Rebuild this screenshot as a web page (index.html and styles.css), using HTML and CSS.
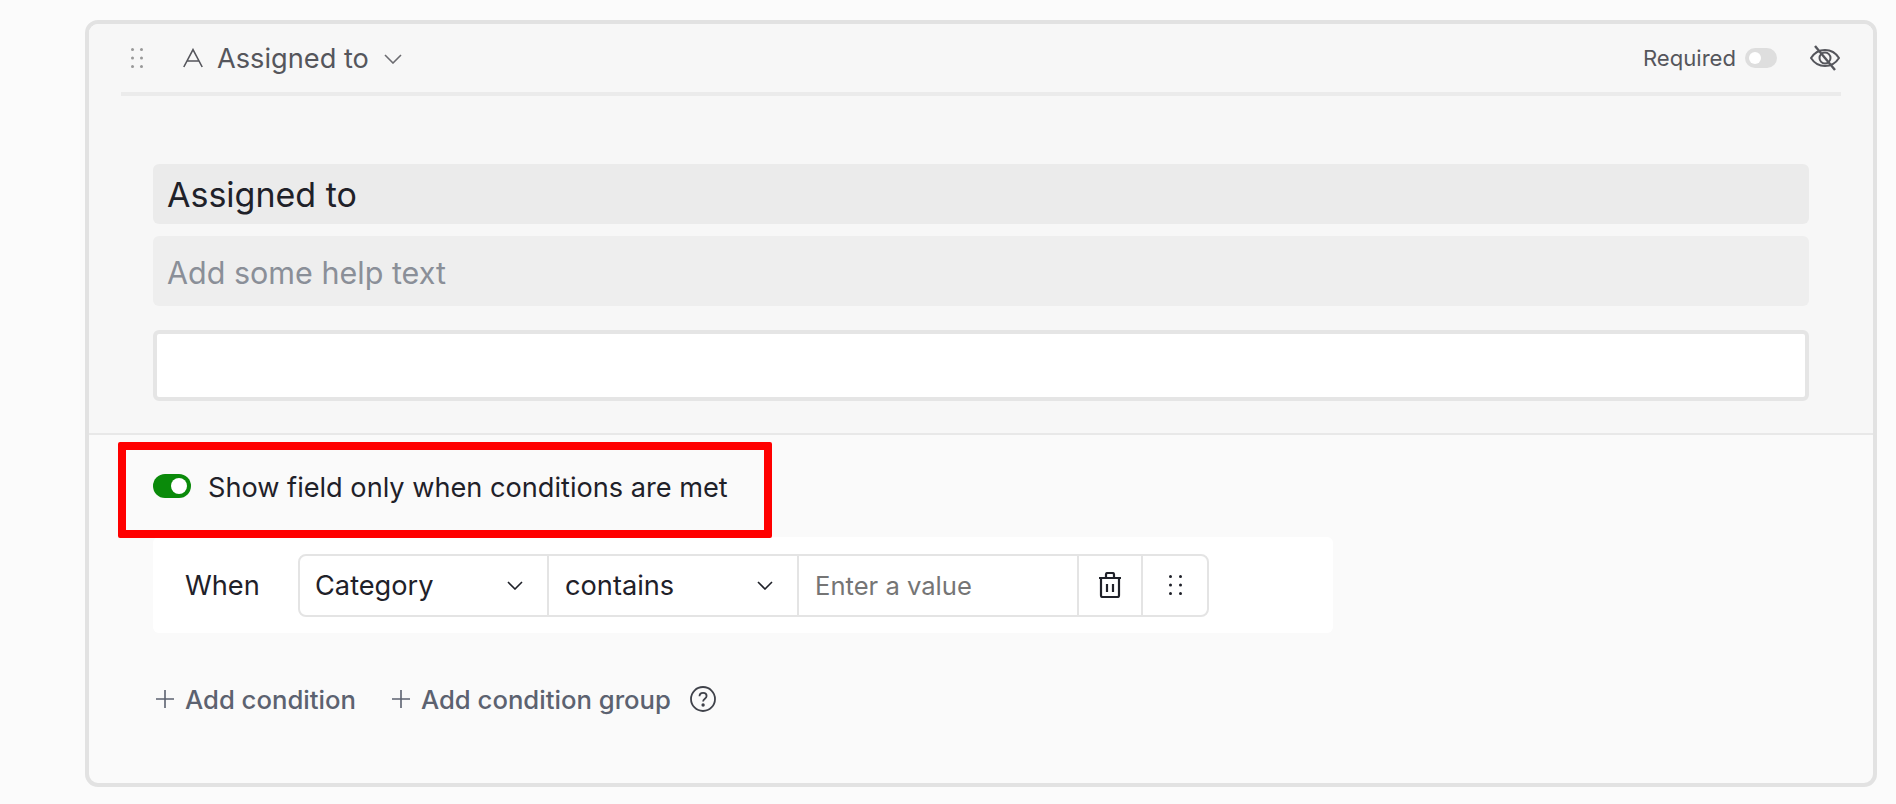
FILE: index.html
```html
<!DOCTYPE html>
<html lang="en">
<head>
<meta charset="utf-8">
<title>Assigned to</title>
<link rel="stylesheet" href="styles.css">
</head>
<body>
<section class="card">
  <div class="top">
    <header class="head">
      <svg class="drag" width="12" height="20" viewBox="0 0 12 20"><g fill="#999"><circle cx="1.5" cy="1.5" r="1.5"/><circle cx="10.5" cy="1.5" r="1.5"/><circle cx="1.5" cy="10" r="1.5"/><circle cx="10.5" cy="10" r="1.5"/><circle cx="1.5" cy="18.5" r="1.5"/><circle cx="10.5" cy="18.5" r="1.5"/></g></svg>
      <svg class="type" width="20" height="20" viewBox="0 0 20 20" fill="none" stroke="#55565c" stroke-width="1.6"><path d="M.8 19 10 1.6 19.2 19M4.2 13h11.6"/></svg>
      <span class="title">Assigned to</span>
      <svg class="caret" width="18" height="10" viewBox="0 0 18 10" fill="none" stroke="#6b6b70" stroke-width="1.6"><path d="M1 1l8 8 8-8"/></svg>
      <span class="req">Required</span>
      <span class="switch-off"><span class="knob-off"></span></span>
      <svg class="eye" width="32" height="26" viewBox="0 0 32 26" fill="none" stroke="#55565c" stroke-width="2"><path d="M2 13c3.500-5.500 8-8 14-8s10.500 2.500 14 8c-3.500 5.500-8 8-14 8S5.500 18.500 2 13z"/><circle cx="16" cy="13" r="5.500"/><path d="M6 1l20 24" stroke-width="2.400"/></svg>
    </header>
    <div class="fields">
      <div class="label-box">Assigned to</div>
      <div class="help-box">Add some help text</div>
      <div class="preview-box"></div>
    </div>
  </div>
  <div class="bottom">
    <div class="highlight"></div>
    <div class="show-row">
      <span class="switch-on"><span class="knob-on"></span></span>
      <span class="show-text">Show field only when conditions are met</span>
    </div>
    <div class="panel">
      <span class="when">When</span>
      <div class="group">
        <div class="cell cell-select"><span>Category</span><svg width="16" height="9" viewBox="0 0 16 9" fill="none" stroke="#1f2129" stroke-width="1.600"><path d="M1 1l7 7 7-7"/></svg></div>
        <div class="cell cell-select"><span>contains</span><svg width="16" height="9" viewBox="0 0 16 9" fill="none" stroke="#1f2129" stroke-width="1.600"><path d="M1 1l7 7 7-7"/></svg></div>
        <div class="cell cell-value">Enter a value</div>
        <div class="cell cell-icon cell-trash">
          <svg width="24" height="26" viewBox="0 0 24 26" fill="none" stroke="#1f2129" stroke-width="2.200"><path d="M1 6h22M8 6V2.500C8 1.700 8.700 1 9.500 1h5c.8 0 1.500.7 1.500 1.500V6M3 6v17.500c0 .8.700 1.500 1.500 1.500h15c.8 0 1.500-.7 1.500-1.500V6M9 12v8M15 12v8"/></svg>
        </div>
        <div class="cell cell-icon cell-dots">
          <svg width="13" height="20" viewBox="0 0 13 20"><g fill="#1f2129"><circle cx="1.500" cy="1.500" r="1.500"/><circle cx="11.500" cy="1.500" r="1.500"/><circle cx="1.500" cy="10" r="1.500"/><circle cx="11.500" cy="10" r="1.500"/><circle cx="1.500" cy="18.500" r="1.500"/><circle cx="11.500" cy="18.500" r="1.500"/></g></svg>
        </div>
      </div>
    </div>
    <div class="adds">
      <span class="add"><svg width="18" height="18" viewBox="0 0 18 18" fill="none" stroke="#5c6270" stroke-width="1.600"><path d="M9 0v18M0 9h18"/></svg>Add condition</span>
      <span class="add add-group"><svg width="18" height="18" viewBox="0 0 18 18" fill="none" stroke="#5c6270" stroke-width="1.600"><path d="M9 0v18M0 9h18"/></svg>Add condition group</span>
      <svg class="help" width="26" height="26" viewBox="0 0 26 26" fill="none" stroke="#3f424a" stroke-width="1.800"><circle cx="13" cy="13" r="12"/><path d="M9.500 10.200c0-2 1.600-3.400 3.600-3.400s3.500 1.300 3.500 3.100c0 2.800-3.500 2.800-3.500 5.600"/><circle cx="13.100" cy="19" r=".8" fill="#3f424a"/></svg>
    </div>
  </div>
</section>
</body>
</html>
```
FILE: styles.css
```css
* { box-sizing: border-box; }
html, body { margin: 0; padding: 0; }
body {
  height: 804px;
  overflow: hidden;
  background: #fbfbfb;
  font-family: Inter, "Liberation Sans", sans-serif;
  color: #1f2129;
}
.card {
  width: 1792px;
  height: 767px;
  margin: 20px 0 0 85px;
  border: 4px solid #e2e2e2;
  border-radius: 13px;
  background: #fafafa;
  overflow: hidden;
}
.top {
  height: 411px;
  background: #f7f7f7;
  border-bottom: 2px solid #e8e8e8;
}
.head {
  height: 72px;
  margin: 0 32px;
  border-bottom: 4px solid #ebebeb;
  display: flex;
  align-items: center;
}
.drag { margin-left: 10px; }
.type { margin-left: 40px; }
.title { margin-left: 14px; font-size: 27.2px; color: #55565c; }
.caret { margin-left: 15px; margin-top: 2px; }
.req { margin-left: auto; font-size: 22.1px; color: #55565c; }
.switch-off {
  width: 32px;
  height: 20px;
  margin-left: 9px;
  border-radius: 10px;
  background: #dedede;
  display: flex;
  align-items: center;
  padding-left: 4px;
}
.knob-off { width: 12px; height: 12px; border-radius: 50%; background: #fff; }
.eye { margin-left: 32px; }
.fields {
  padding: 68px 64px 0;
  display: flex;
  flex-direction: column;
}
.label-box, .help-box { display: flex; align-items: center; padding-left: 14px; border-radius: 6px; }
.label-box { height: 60px; background: #ebebeb; font-size: 34px; color: #1f2129; }
.help-box { height: 70px; margin-top: 12px; padding-top: 2px; background: #eeeeee; font-size: 30.5px; color: #8a8f98; }
.preview-box {
  height: 71px;
  margin-top: 24px;
  background: #fff;
  border: 4px solid #e5e5e5;
  border-radius: 6px;
}
.bottom { position: relative; padding: 0 64px; }
.highlight {
  position: absolute;
  left: 29px;
  top: 7px;
  width: 654px;
  height: 96px;
  border: 8px solid #ff0000;
  border-radius: 2px;
}
.show-row { height: 102px; display: flex; align-items: center; }
.switch-on {
  width: 38px;
  height: 24px;
  border-radius: 12px;
  background: #0a8a0a;
  display: flex;
  align-items: center;
  justify-content: flex-end;
  padding-right: 4px;
}
.knob-on { width: 16px; height: 16px; border-radius: 50%; background: #fff; }
.show-text { margin-left: 17px; font-size: 27.15px; padding-top: 2px; }
.panel {
  width: 1180px;
  height: 96px;
  background: #fff;
  border-radius: 6px;
  display: flex;
  align-items: center;
  padding-left: 32px;
}
.when { width: 113px; font-size: 27.2px; }
.group {
  display: flex;
  width: 911px;
  height: 63px;
  border: 2px solid #e4e4e4;
  border-radius: 8px;
}
.cell { display: flex; align-items: center; font-size: 27.2px; border-right: 2px solid #e4e4e4; }
.cell-select { width: 250px; padding: 0 24px 0 16px; justify-content: space-between; }
.cell-select:first-child { width: 249px; padding-left: 15px; }
.cell-value { width: 280px; padding-left: 16px; font-size: 25.6px; color: #757575; }
.cell-icon { justify-content: center; }
.cell-trash { width: 64px; }
.cell-dots { flex: 1; border-right: 0; }
.adds { display: flex; align-items: center; height: 52px; margin-top: 40px; margin-left: 3px; }
.add { display: flex; align-items: center; gap: 11px; font-size: 25.7px; font-weight: 500; color: #5c6270; }
.add-group { margin-left: 36px; }
.help { margin-left: 19px; }
```
